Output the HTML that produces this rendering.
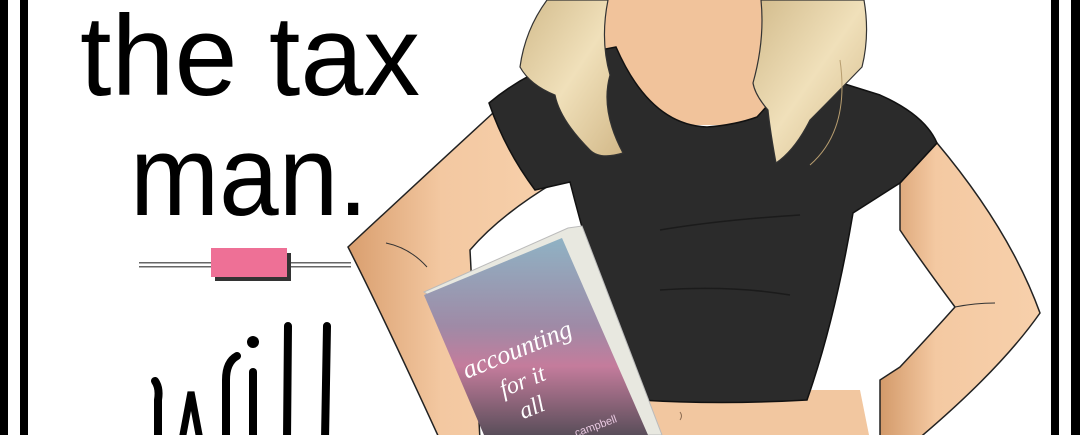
<!DOCTYPE html>
<html><head><meta charset="utf-8"><style>
html,body{margin:0;padding:0;background:#fff;}
body{width:1080px;height:435px;overflow:hidden;position:relative;}
svg{position:absolute;left:0;top:0;}
</style></head><body>
<svg width="1080" height="435" viewBox="0 0 1080 435" xmlns="http://www.w3.org/2000/svg">
<defs>
<linearGradient id="skin" x1="0" y1="0" x2="1" y2="0"><stop offset="0" stop-color="#d99e6e"/><stop offset="0.45" stop-color="#f3c8a1"/><stop offset="1" stop-color="#f7d0ab"/></linearGradient>
<linearGradient id="skinR" x1="0" y1="0" x2="1" y2="0"><stop offset="0" stop-color="#d39a6a"/><stop offset="0.35" stop-color="#f4c9a2"/><stop offset="1" stop-color="#f7d0ab"/></linearGradient>
<linearGradient id="hair" x1="0" y1="0" x2="1" y2="1"><stop offset="0" stop-color="#d2bb8c"/><stop offset="0.5" stop-color="#f0e0ba"/><stop offset="1" stop-color="#d2b888"/></linearGradient>
<linearGradient id="cover" x1="0" y1="0" x2="0" y2="1"><stop offset="0" stop-color="#8fb2c4"/><stop offset="0.45" stop-color="#9f8aa6"/><stop offset="0.65" stop-color="#c47c9c"/><stop offset="1" stop-color="#5a4e5a"/></linearGradient>
</defs>
<rect x="0" y="0" width="8" height="435" fill="#000"/>
<rect x="20" y="0" width="8" height="435" fill="#000"/>
<rect x="1051" y="0" width="8" height="435" fill="#000"/>
<rect x="1071" y="0" width="9" height="435" fill="#000"/>
<text x="80" y="95" font-family="Liberation Sans, sans-serif" font-size="114" textLength="340" lengthAdjust="spacingAndGlyphs" fill="#000">the tax</text>
<text x="130" y="215" font-family="Liberation Sans, sans-serif" font-size="114" textLength="238" lengthAdjust="spacingAndGlyphs" fill="#000">man.</text>
<rect x="139" y="262" width="212" height="1.5" fill="#666"/>
<rect x="139" y="266" width="212" height="1.5" fill="#666"/>
<rect x="215" y="253" width="76" height="28" fill="#333"/>
<rect x="211" y="248" width="76" height="29" fill="#ee7096"/>
<g stroke="#000" stroke-width="8" stroke-linecap="round" fill="none">
<path d="M155 381 Q160 388 158 400 L158 440"/>
<path d="M182 440 L191 392 L200 440" stroke-width="7"/>
<path d="M237 356 Q226 362 226 380 L226 440"/>
<path d="M253 372 L253 440"/>
<path d="M288 326 L287 440"/>
<path d="M327 326 L325 440"/>
</g>
<circle cx="253" cy="342" r="6" fill="#000"/>
<!-- right arm -->
<path d="M900 183 L937 143 Q1010 230 1040 313 Q1000 370 917 440 L880 440 L880 380 L900 367 Q930 335 955 307 Q920 260 900 230 Z" fill="url(#skinR)" stroke="#222" stroke-width="1.5"/>
<path d="M955 307 Q975 303 995 303" stroke="#333" stroke-width="1" fill="none"/>
<!-- left arm -->
<path d="M493 113 L555 182 Q500 215 470 250 L480 440 L440 440 Q385 320 348 247 Q420 180 493 113 Z" fill="url(#skin)" stroke="#222" stroke-width="1.5"/>
<path d="M386 243 Q410 248 427 267" stroke="#333" stroke-width="1" fill="none"/>
<!-- neck/chest -->
<path d="M600 0 L770 0 L770 125 L600 125 Z" fill="#f1c39b"/>
<!-- belly -->
<path d="M600 390 L860 390 L870 440 L595 440 Z" fill="#f2c7a0"/>
<path d="M680 412 q3 4 0 8" stroke="#8a6a50" stroke-width="1" fill="none"/>
<!-- shirt -->
<path d="M616 47 Q650 125 707 127 Q735 125 757 117 L800 70 L880 95 Q925 115 937 143 L900 183 L853 213 Q835 320 807 400 Q720 405 640 400 Q600 300 570 182 L535 190 Q505 150 489 103 Q540 60 616 47 Z" fill="#2b2b2b" stroke="#111" stroke-width="1.5"/>
<path d="M660 230 Q720 220 800 215" stroke="#1b1b1b" stroke-width="1.5" fill="none"/>
<path d="M660 290 Q730 285 790 295" stroke="#1b1b1b" stroke-width="1.5" fill="none"/>
<!-- hair -->
<path d="M547 0 L608 0 Q600 40 610 75 Q600 110 623 153 Q600 160 590 150 Q560 120 555 95 Q530 85 520 67 Q525 30 547 0 Z" fill="url(#hair)" stroke="#333" stroke-width="1.2"/>
<path d="M761 0 L864 0 Q870 35 862 67 Q830 100 810 120 Q795 150 776 163 Q770 130 768 110 Q755 95 753 83 Q765 40 761 0 Z" fill="url(#hair)" stroke="#333" stroke-width="1.2"/>
<path d="M840 60 Q850 130 810 165" stroke="#b89e70" stroke-width="1" fill="none"/>
<!-- book -->
<path d="M424 292 L568 228 L582 226 L662 435 L648 435 Z" fill="#e8e8e0" stroke="#bbb" stroke-width="1"/>
<path d="M424 295 L562 238 L648 435 L484 435 Z" fill="url(#cover)"/>
<text x="462" y="365" font-family="Liberation Serif, serif" font-style="italic" font-size="26" fill="#fff" transform="rotate(-22 500 360)">accounting</text>
<text x="500" y="390" font-family="Liberation Serif, serif" font-style="italic" font-size="24" fill="#fff" transform="rotate(-22 520 385)">for it</text>
<text x="520" y="412" font-family="Liberation Serif, serif" font-style="italic" font-size="24" fill="#fff" transform="rotate(-22 540 408)">all</text>
<text x="575" y="430" font-family="Liberation Sans, sans-serif" font-size="11" fill="#e8c8e0" transform="rotate(-20 595 430)">campbell</text>
</svg>
</body></html>
